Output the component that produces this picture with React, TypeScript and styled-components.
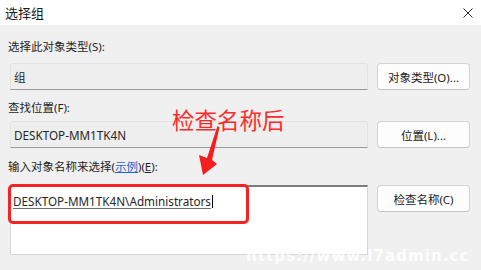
import styled, { createGlobalStyle } from 'styled-components'

const Global = createGlobalStyle`
    html, body {
        margin: 0;
        padding: 0;
        background: #f0f0f0;
    }
    body {
        font-family: "Noto Sans", "Noto Sans CJK SC", sans-serif;
        color: #1a1a1a;
    }
`

const Window = styled.div`
    position: relative;
    width: 481px;
    height: 270px;
    background: #f0f0f0;
    overflow: hidden;
    display: flex;
    flex-flow: column nowrap;
`

const TitleBar = styled.div`
    height: 25px;
    background: #ffffff;
    display: flex;
    align-items: center;
    justify-content: space-between;
    padding: 0 8px 0 5px;
    flex-shrink: 0;
`

const Title = styled.span`
    font-size: 13px;
    color: #1b1b1b;
`

const Body = styled.div`
    display: flex;
    flex-flow: column nowrap;
    padding: 0 11px 0 10px;
`

const Label = styled.div<{ $gap: number }>`
    margin-top: ${p => p.$gap}px;
    margin-left: -2px;
    font-size: 11.5px;
    line-height: 16px;
    color: #1f1f1f;

    a {
        color: #1a66cc;
        text-decoration: underline;
    }
    u {
        text-decoration: underline;
    }
`

const Row = styled.div<{ $gap: number }>`
    margin-top: ${p => p.$gap}px;
    display: grid;
    grid-template-columns: 358px 93px;
    column-gap: 9px;
    align-items: start;
`

const Field = styled.div`
    height: 27px;
    box-sizing: border-box;
    background: #eeeeee;
    border: 1px solid #e2e2e2;
    border-bottom: 1px solid #9a9a9a;
    border-radius: 3px 3px 0 0;
    display: flex;
    align-items: center;
    padding-left: 3px;
    font-size: 11.7px;
    color: #262626;
`

const NameBox = styled.div`
    height: 70px;
    box-sizing: border-box;
    background: #ffffff;
    border: 1px solid #d6d6d6;
    border-top: 2px solid #7c7c7c;
    padding: 6px 0 0 2px;
    font-size: 11.7px;
    line-height: 16px;
    color: #262626;
`

const Resolved = styled.span`
    text-decoration: underline;
    text-decoration-color: #6e6e6e;
    text-underline-offset: 2px;
`

const Caret = styled.span`
    display: inline-block;
    width: 1px;
    height: 13px;
    background: #000;
    vertical-align: -2px;
    margin-left: 1px;
`

const Button = styled.div`
    height: 27px;
    box-sizing: border-box;
    background: #fdfdfd;
    border: 1px solid #d3d3d3;
    border-bottom-color: #c4c4c4;
    border-radius: 4px;
    display: flex;
    align-items: center;
    justify-content: center;
    font-size: 11.5px;
    color: #1b1b1b;
`

const Highlight = styled.div`
    position: absolute;
    left: 8px;
    top: 184px;
    width: 241px;
    height: 40px;
    box-sizing: border-box;
    border: 3px solid #f52323;
    border-radius: 5px;
`

const Callout = styled.div`
    position: absolute;
    left: 172px;
    top: 104px;
    font-size: 22.5px;
    line-height: 30px;
    color: #ff2b2b;
    font-family: "Noto Sans CJK SC", sans-serif;
`

const Arrow = styled.svg`
    position: absolute;
    left: 195px;
    top: 125px;
`

const Watermark = styled.div`
    position: absolute;
    left: 246px;
    top: 247px;
    font-family: "DejaVu Sans", sans-serif;
    font-weight: bold;
    font-size: 15px;
    letter-spacing: 1.1px;
    color: rgba(255, 255, 255, 0.92);
`

function CloseIcon() {
    return (
        <svg width="10" height="10" viewBox="0 0 10 10">
            <path d="M0.5 0.5 L9.5 9.5 M9.5 0.5 L0.5 9.5" stroke="#2a2a2a" strokeWidth="1" />
        </svg>
    )
}

export default function App() {
    return (
        <Window>
            <Global />
            <TitleBar>
                <Title>选择组</Title>
                <CloseIcon />
            </TitleBar>
            <Body>
                <Label $gap={14}>选择此对象类型(S):</Label>
                <Row $gap={8}>
                    <Field>组</Field>
                    <Button>对象类型(O)...</Button>
                </Row>
                <Label $gap={10}>查找位置(F):</Label>
                <Row $gap={5}>
                    <Field>DESKTOP-MM1TK4N</Field>
                    <Button>位置(L)...</Button>
                </Row>
                <Label $gap={11}>
                    输入对象名称来选择(<a>示例</a>)(<u>E</u>):
                </Label>
                <Row $gap={10}>
                    <NameBox>
                        <Resolved>DESKTOP-MM1TK4N\Administrators</Resolved>
                        <Caret />
                    </NameBox>
                    <Button>检查名称(C)</Button>
                </Row>
            </Body>
            <Highlight />
            <Callout>检查名称后</Callout>
            <Arrow width="28" height="52" viewBox="0 0 28 52">
                <polygon points="22.5,1 24.5,2.5 17,35 22,39 8,50 4,30 12,33" fill="#f51d1d" />
            </Arrow>
            <Watermark>https://www.l7admin.cc</Watermark>
        </Window>
    )
}
